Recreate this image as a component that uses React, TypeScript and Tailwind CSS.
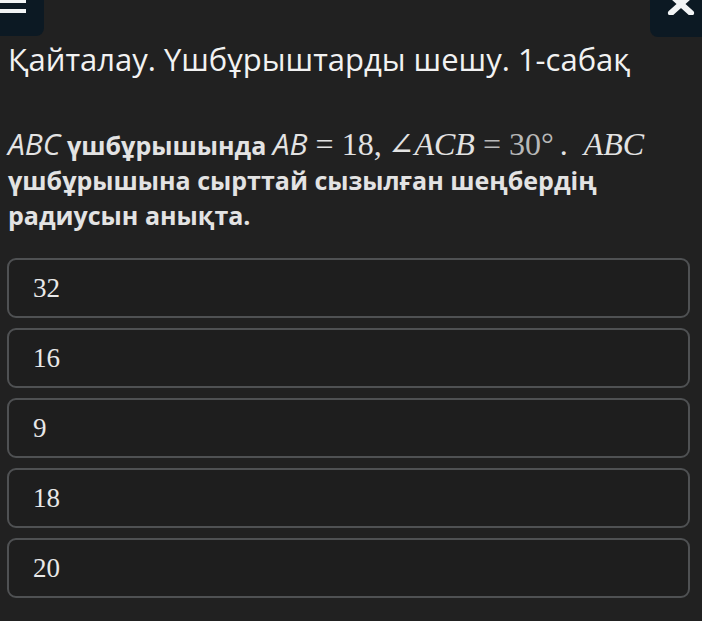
const options = ["32", "16", "9", "18", "20"];

const serif = { fontFamily: '"Liberation Serif", "DejaVu Serif", serif' };

function Menu() {
  return (
    <div className="h-[36px] w-[44px] rounded-br-[8px] bg-[#0c1923] flex flex-col gap-[6px]">
      <div className="h-[4px] w-[26px] bg-[#f2f4f5] -mt-[1px]" />
      <div className="h-[4px] w-[26px] bg-[#f2f4f5]" />
    </div>
  );
}

function Close() {
  return (
    <div className="h-[37px] w-[52px] rounded-bl-[8px] bg-[#0c1923] flex justify-center">
      <svg width="28" height="22" viewBox="0 0 28 22" className="-mt-[7px] ml-[10px]">
        <path d="M4 2 L24 20 M24 2 L4 20" stroke="#f2f4f5" strokeWidth="6" strokeLinecap="round" />
      </svg>
    </div>
  );
}

export default function App() {
  return (
    <div className="w-[702px] h-[621px] overflow-hidden bg-[#212121] text-[#e6e6e6]" style={{ fontFamily: '"Open Sans", "Noto Sans", sans-serif' }}>
      <div className="flex justify-between">
        <Menu />
        <Close />
      </div>

      <h1 className="px-[8px] mt-[2px] text-[31px] leading-[40px] font-normal text-[#f2f2f2]">
        Қайталау. Үшбұрыштарды шешу. 1-сабақ
      </h1>

      <p className="px-[8px] mt-[49px] text-[25px] leading-[35px] font-bold text-[#e3e3e3]">
        <span className="italic font-normal text-[30px] leading-[30px]">ABC</span> үшбұрышында{" "}
        <span className="italic font-normal text-[30px] leading-[30px]">AB</span>
        <span className="font-normal text-[32px] leading-[30px]" style={serif}>
          <span className="mx-[8px]">=</span>18,<span className="ml-[6px]">∠</span>
          <span className="italic">ACB</span>
          <span className="text-[#b8b8b8]">
            <span className="mx-[8px]">=</span>30°
          </span>
          <span className="ml-[6px]">.</span>
          <span className="italic ml-[16px]">ABC</span>
        </span>
        <br />
        үшбұрышына сырттай сызылған шеңбердің радиусын анықта.
      </p>

      <div className="mt-[25px] pl-[7px] pr-[12px] flex flex-col gap-[10px]">
        {options.map((o) => (
          <div
            key={o}
            className="h-[60px] rounded-[9px] border-2 border-[#4f5153] bg-[#1e1e1e] flex items-center pl-[24px] text-[27px] text-[#e8e8e8]"
            style={serif}
          >
            {o}
          </div>
        ))}
      </div>
    </div>
  );
}
